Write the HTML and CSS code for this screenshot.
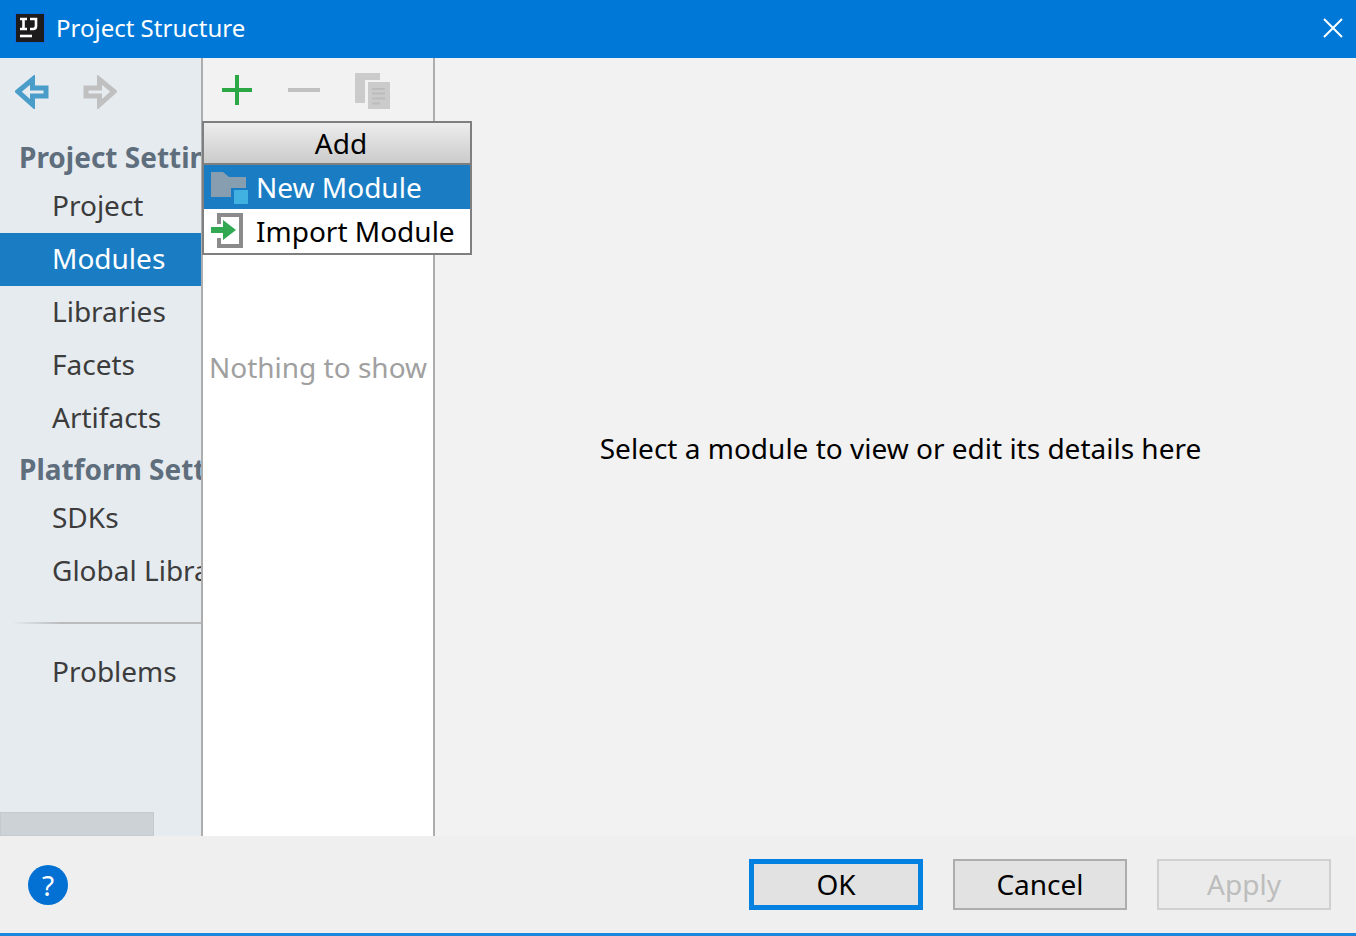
FILE: index.html
```html
<!DOCTYPE html>
<html lang="en">
<head>
    <meta charset="UTF-8">
    <meta name="viewport" content="width=device-width, initial-scale=1.0">
    <title>Project Structure</title>
    <link rel="stylesheet" href="styles.css">
</head>
<body>
    <div class="dialog">
        <!-- Title bar -->
        <header class="titlebar">
            <svg class="logo" width="30" height="30" viewBox="0 0 30 30" aria-hidden="true">
                <rect x="0" y="0" width="30" height="30" fill="#0a6be0"/>
                <rect x="1" y="1" width="28" height="28" fill="#1d1b1c"/>
                <path d="M5 6h7M8.500 6v10M5 16h7M15 6h6v7q0 3-3 3h-3" fill="none" stroke="#fff" stroke-width="2.600"/>
                <path d="M5 23h12" stroke="#fff" stroke-width="2.600"/>
            </svg>
            <h1>Project Structure</h1>
            <button class="close-btn" aria-label="Close">
                <svg width="22" height="22" viewBox="0 0 22 22"><path d="M2 2l18 18M20 2L2 20" stroke="#fff" stroke-width="2"/></svg>
            </button>
        </header>

        <main class="content">
            <!-- Left navigation -->
            <nav class="sidebar">
                <div class="history">
                    <button class="icon-btn" aria-label="Back">
                        <svg width="34" height="34" viewBox="0 0 34 34"><path d="M3 16.500L17.500 4.500v8.500h13.500v8h-13.500v8.500z" fill="none" stroke="#4a9cc9" stroke-width="5"/></svg>
                    </button>
                    <button class="icon-btn" aria-label="Forward" disabled>
                        <svg width="34" height="34" viewBox="0 0 34 34"><path d="M31 16.500L16.500 4.500v8.500H3v8h13.500v8.500z" fill="none" stroke="#c0c0c0" stroke-width="5"/></svg>
                    </button>
                </div>
                <h2>Project Settings</h2>
                <a href="#project">Project</a>
                <a href="#modules" class="active">Modules</a>
                <a href="#libraries">Libraries</a>
                <a href="#facets">Facets</a>
                <a href="#artifacts">Artifacts</a>
                <h2>Platform Settings</h2>
                <a href="#sdks">SDKs</a>
                <a href="#global">Global Libraries</a>
                <div class="separator"></div>
                <a href="#problems">Problems</a>
                <div class="scroll-thumb"></div>
            </nav>

            <!-- Module list -->
            <section class="modules">
                <div class="toolbar">
                    <button class="icon-btn" aria-label="Add">
                        <svg width="36" height="36" viewBox="0 0 36 36"><path d="M3 18h30M18 3v30" stroke="#2ba745" stroke-width="4"/></svg>
                    </button>
                    <button class="icon-btn" aria-label="Remove" disabled>
                        <svg width="36" height="36" viewBox="0 0 36 36"><path d="M2 18h32" stroke="#c1c1c1" stroke-width="4"/></svg>
                    </button>
                    <button class="icon-btn" aria-label="Copy" disabled>
                        <svg width="38" height="38" viewBox="0 0 38 38">
                            <path d="M2 2h25v7H12v23H2z" fill="#cbcbcb"/>
                            <path d="M15 11h22v27H15z" fill="#cbcbcb"/>
                            <path d="M19 18h13M19 22.500h13M19 27.500h13M19 32.500h8" stroke="#bcbcbc" stroke-width="2"/>
                        </svg>
                    </button>
                    <div class="popup">
                        <div class="popup-title">Add</div>
                        <button class="popup-item selected">
                            <svg width="38" height="36" viewBox="0 0 38 36">
                                <path d="M0 3h12l6 5h17v11H20v9H0z" fill="#869eaf"/>
                                <path d="M23 21h14v14H23z" fill="#40b1e0"/>
                            </svg>
                            New Module
                        </button>
                        <button class="popup-item">
                            <svg width="38" height="36" viewBox="0 0 38 36">
                                <path d="M8 11V2h22v31H8v-8" fill="none" stroke="#8b8b8b" stroke-width="4"/>
                                <path d="M0 14h12V7l13 10-13 10v-7H0z" fill="#32a852"/>
                            </svg>
                            Import Module
                        </button>
                    </div>
                </div>
                <p class="empty">Nothing to show</p>
            </section>

            <section class="details">
                <p>Select a module to view or edit its details here</p>
            </section>
        </main>

        <!-- Buttons -->
        <footer class="footer">
            <button class="help-btn" aria-label="Help">?</button>
            <button class="btn btn-default">OK</button>
            <button class="btn">Cancel</button>
            <button class="btn" disabled>Apply</button>
        </footer>
    </div>
</body>
</html>
```
FILE: styles.css
```css
* {
    box-sizing: border-box;
}
body {
    margin: 0;
    font-family: "Noto Sans", "Open Sans", sans-serif;
    font-size: 28px;
    line-height: 36px;
    color: #000;
    background: #f2f2f2;
}
h1, h2, p {
    margin: 0;
}
button {
    font: inherit;
    color: inherit;
}
svg {
    display: block;
    flex-shrink: 0;
}
.dialog {
    display: flex;
    flex-direction: column;
    min-height: 100vh;
    border-bottom: 3px solid #1c86dc;
}
.titlebar {
    display: flex;
    align-items: center;
    gap: 11px;
    height: 58px;
    padding: 0 12px 2px 15px;
    background: #0078d7;
    color: #fff;
}
.titlebar h1 {
    flex: 1;
    font-size: 24px;
    font-weight: normal;
}
.close-btn {
    padding: 0;
    border: none;
    background: none;
}
.content {
    display: flex;
    flex: 1;
}

/* Sidebar */
.sidebar {
    display: flex;
    flex-direction: column;
    width: 203px;
    border-right: 2px solid #adadad;
    background: #e6ebf0;
    overflow: hidden;
    white-space: nowrap;
}
.history {
    display: flex;
    align-items: center;
    gap: 34px;
    height: 67px;
    margin-bottom: 8px;
    padding-left: 15px;
}
.icon-btn {
    padding: 0;
    border: none;
    background: none;
}
.sidebar h2 {
    padding: 2px 0 0 19px;
    font-size: 28px;
    line-height: 45px;
    color: #5f6e7c;
}
.sidebar a {
    padding: 0 0 2px 52px;
    line-height: 51px;
    color: #3c3c3c;
    text-decoration: none;
}
.sidebar a.active {
    background: #1a7dc4;
    color: #fff;
}
.separator {
    height: 2px;
    margin: 24px 0 22px 12px;
    background: linear-gradient(to right, #e6ebf0, #b9bbbd 50px);
}
.scroll-thumb {
    width: 154px;
    height: 24px;
    margin-top: auto;
    border: 1px solid #c5cace;
    background: #cdd2d6;
}

/* Module list */
.modules {
    width: 232px;
    border-right: 2px solid #adadad;
    background: #fff;
}
.toolbar {
    position: relative;
    display: flex;
    align-items: center;
    gap: 31px;
    height: 64px;
    padding-left: 16px;
    background: #f2f2f2;
}
.popup {
    position: absolute;
    top: 63px;
    left: -1px;
    width: 270px;
    border: 2px solid #7f7f7f;
    background: #fff;
    white-space: nowrap;
}
.popup-title {
    height: 42px;
    padding-left: 8px;
    border-bottom: 2px solid #7f7f7f;
    background: linear-gradient(#ededed, #cbcbcb);
    line-height: 40px;
    text-align: center;
}
.popup-item {
    display: flex;
    align-items: center;
    gap: 7px;
    width: 100%;
    height: 44px;
    padding: 0 7px;
    border: none;
    background: #fff;
}
.popup-item.selected {
    background: #1a7dc4;
    color: #fff;
}
.empty {
    padding-top: 227px;
    color: #a0a0a0;
    text-align: center;
    white-space: nowrap;
}
.details {
    display: flex;
    flex: 1;
    align-items: center;
    justify-content: center;
    padding: 2px 0 0 10px;
}

/* Footer */
.footer {
    display: flex;
    align-items: center;
    gap: 30px;
    height: 97px;
    padding: 0 25px 0 28px;
    background: #efefef;
}
.help-btn {
    width: 40px;
    height: 40px;
    margin-right: auto;
    padding: 0;
    border: none;
    border-radius: 50%;
    background: #0370d3;
    color: #fff;
}
.btn {
    width: 174px;
    height: 51px;
    padding: 0 0 2px;
    border: 2px solid #adadad;
    background: #e2e2e2;
}
.btn-default {
    border: 5px solid #0281e0;
}
.btn:disabled {
    border-color: #d0d0d0;
    background: #ebebeb;
    color: #bdbdbd;
}
```
